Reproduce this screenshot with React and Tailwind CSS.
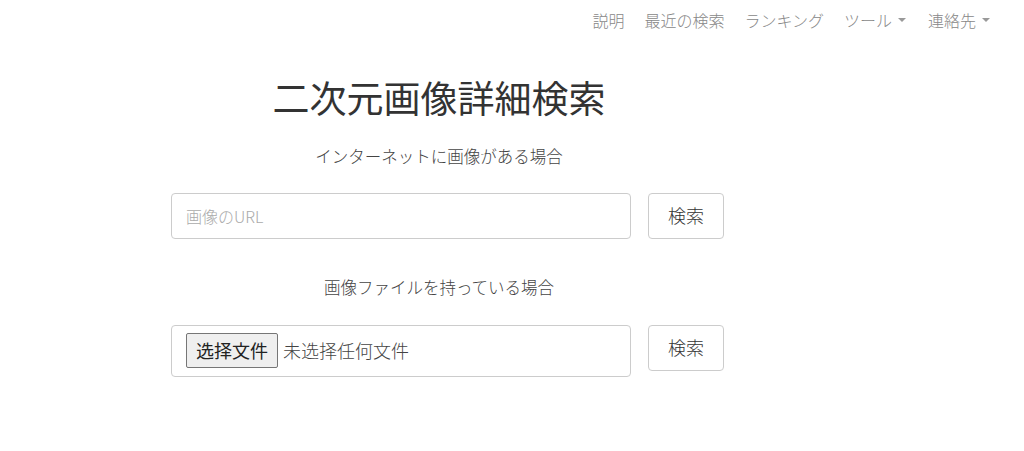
const JP = { fontFamily: '"Noto Sans CJK JP", "Noto Sans", sans-serif' }

function Caret() {
  return <span className="ml-[6px] inline-block h-0 w-0 border-x-[4px] border-t-[4px] border-x-transparent border-t-[#999] align-middle" />
}

export default function App() {
  return (
    <div className="min-h-[451px] bg-white text-[#333]" style={JP}>
      {/* navbar */}
      <nav className="flex h-[40px] justify-end pr-[24px]">
        <ul className="flex items-center text-[16px] text-[#888] font-light">
          <li className="px-[10px]">説明</li>
          <li className="px-[10px]">最近の検索</li>
          <li className="px-[10px]">ランキング</li>
          <li className="flex items-center px-[10px]">ツール<Caret /></li>
          <li className="flex items-center pl-[12px] pr-[10px]">連絡先<Caret /></li>
        </ul>
      </nav>

      <main className="ml-[171px] w-[536px] pt-[30px]">
        <h1 className="text-center text-[37px] leading-[54px] font-normal text-[#333]">二次元画像詳細検索</h1>

        <p className="mt-[20px] text-center text-[16.5px] font-light text-[#444]">インターネットに画像がある場合</p>

        <div className="mt-[24px] flex items-center gap-[17px]">
          <input
            placeholder="画像のURL"
            className="h-[46px] w-[460px] shrink-0 rounded-[4px] border border-[#ccc] px-[14px] text-[16px] font-light placeholder:text-[#aaa] outline-none"
            style={JP}
          />
          <button className="h-[46px] w-[76px] shrink-0 rounded-[4px] border border-[#ccc] bg-white text-[18px] font-light text-[#333]">検索</button>
        </div>

        <p className="mt-[36px] text-center text-[16.5px] font-light text-[#444]">画像ファイルを持っている場合</p>

        <div className="mt-[25px] flex items-start gap-[17px]">
          <div className="flex h-[52px] w-[460px] shrink-0 items-center rounded-[4px] border border-[#ccc] pl-[14px]">
            <span className="flex h-[35px] items-center rounded-[2px] border border-[#767676] bg-[#efefef] px-[9px] text-[18px] text-[#222]">选择文件</span>
            <span className="ml-[5px] text-[18px] font-light text-[#444]">未选择任何文件</span>
          </div>
          <button className="h-[46px] w-[76px] shrink-0 rounded-[4px] border border-[#ccc] bg-white text-[18px] font-light text-[#333]">検索</button>
        </div>
      </main>
    </div>
  )
}
